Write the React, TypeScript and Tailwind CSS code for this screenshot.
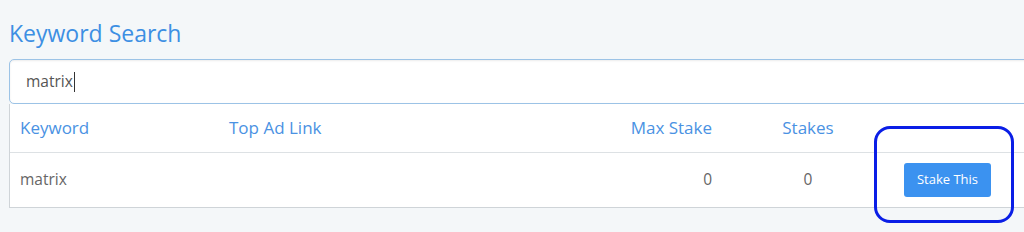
import React from "react";

export default function App() {
  return (
    <div className="w-[1024px] h-[232px] overflow-hidden bg-[#f4f7f9] relative" style={{ fontFamily: "'Open Sans', Lato, sans-serif" }}>
      <div className="pl-[9px] pt-[19px] w-[1060px]">
        <h2 className="text-[23px] leading-[28px] text-[#3d8fe3] font-normal">Keyword Search</h2>
        <div className="mt-[12px] h-[45px] bg-white border border-[#9cc3e6] rounded-l-[5px] flex items-center pl-[16px] shadow-[inset_0_1px_2px_rgba(0,0,0,0.08)]">
          <span className="text-[15.5px] text-[#555]">matrix</span>
          <span className="w-px h-[20px] bg-[#333] ml-[1px]"></span>
        </div>
        <div className="bg-white border-l border-b border-[#cfd4d8]">
          <div className="flex items-center h-[49px] border-b border-[#dde1e4] text-[17px] text-[#4a92e3]">
            <div className="w-[219px] pl-[10px]">Keyword</div>
            <div className="w-[300px]">Top Ad Link</div>
            <div className="w-[183px] text-right">Max Stake</div>
            <div className="w-[192px] text-center">Stakes</div>
            <div className="flex-1"></div>
          </div>
          <div className="flex items-center h-[54px] text-[15.5px] text-[#666]">
            <div className="w-[219px] pl-[10px]">matrix</div>
            <div className="w-[300px]"></div>
            <div className="w-[183px] text-right">0</div>
            <div className="w-[192px] text-center">0</div>
            <div className="flex-1 flex">
              <button className="w-[87px] h-[34px] bg-[#3b92f0] text-white text-[13px] rounded-[3px]">Stake This</button>
            </div>
          </div>
        </div>
      </div>
      <div className="absolute left-[874px] top-[126px] w-[140px] h-[97px] border-[3px] border-[#0a1ee6] rounded-[16px]"></div>
    </div>
  );
}
